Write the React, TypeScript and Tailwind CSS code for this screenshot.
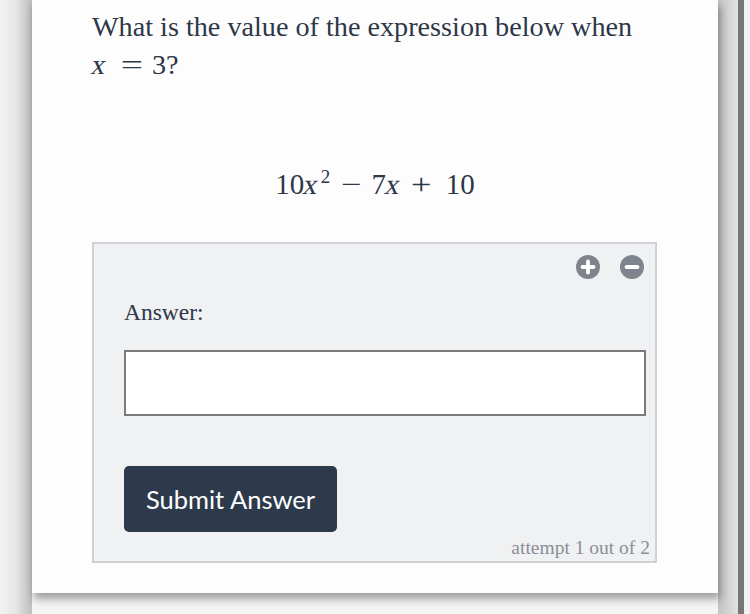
import React from "react";

const serif = { fontFamily: '"Liberation Serif", "Times New Roman", serif' };

function CircleIcon({ kind }: { kind: "plus" | "minus" }) {
  return (
    <svg width="24" height="24" viewBox="0 0 24 24" aria-hidden="true">
      <circle cx="12" cy="12" r="12" fill="#7f848c" />
      {kind === "plus" ? (
        <path d="M12 6.5v11M6.5 12h11" stroke="#fff" strokeWidth="3.8" strokeLinecap="round" />
      ) : (
        <path d="M6.5 12h11" stroke="#fff" strokeWidth="3.8" strokeLinecap="round" />
      )}
    </svg>
  );
}

// math variable: upright serif x slanted, italic face is not installed
function Var({ children }: { children: React.ReactNode }) {
  return <span className="inline-block -skew-x-12">{children}</span>;
}

export default function App() {
  return (
    <div className="w-[750px] h-[614px] overflow-hidden bg-[#f4f4f4] flex">
      {/* left gutter */}
      <div className="w-[32px] h-full bg-gradient-to-r from-[#f2f2f2] via-[#e6e6e6] to-[#bdbdbd]" />

      {/* card */}
      <div className="w-[686px] h-[593px] bg-[#fdfdfd] shadow-[2px_6px_8px_rgba(0,0,0,0.35)] relative z-10 pl-[60px] pr-[60px] flex flex-col">
        <p className="mt-[8px] text-[28.2px] leading-[38px] text-[#2d3748] whitespace-nowrap" style={serif}>
          What is the value of the expression below when
          <br />
          <Var>x</Var>
          <span className="ml-[18px] mr-[12px] inline-block scale-x-[1.4]">=</span>3?
        </p>

        <div className="mt-[80px] h-[40px] text-center text-[29px] leading-[40px] text-[#2d3748] whitespace-nowrap" style={serif}>
          10<Var>x</Var>
          <sup className="text-[19px] ml-[2px] top-[-11px]">2</sup>
          <span className="ml-[13px] mr-[12px] inline-block scale-x-125">−</span>7<Var>x</Var>
          <span className="ml-[12px] mr-[17px] inline-block scale-x-125">+</span>10
        </div>

        <div className="mt-[38px] w-[565px] h-[321px] border-2 border-[#cfd1d5] bg-[#f0f1f3] flex flex-col pl-[30px]">
          <div className="flex justify-end gap-[20px] pt-[11px] pr-[11px]">
            <CircleIcon kind="plus" />
            <CircleIcon kind="minus" />
          </div>

          <div className="mt-[19px] text-[23.5px] leading-[28px] text-[#2d3748]" style={serif}>
            Answer:
          </div>

          <input
            type="text"
            className="mt-[24px] w-[522px] h-[66px] bg-white border-2 border-[#7a7a7a] outline-none"
          />

          <button
            className="mt-[50px] w-[213px] h-[66px] rounded-[5px] bg-[#2d3a4c] text-white text-[25.5px]"
            style={{ fontFamily: 'Lato, "Open Sans", sans-serif' }}
          >
            Submit Answer
          </button>

          <div className="mt-[4px] pr-[5px] text-right text-[19.5px] leading-[24px] text-[#8a8e96]" style={serif}>
            attempt 1 out of 2
          </div>
        </div>
      </div>

      {/* right side */}
      <div className="w-[20px] h-full bg-gradient-to-r from-[#c3c3c3] to-[#e2e2e2]" />
      <div className="w-[6px] h-full bg-[#777777]" />
      <div className="flex-1 h-full bg-[#f2f2f2]" />
    </div>
  );
}
